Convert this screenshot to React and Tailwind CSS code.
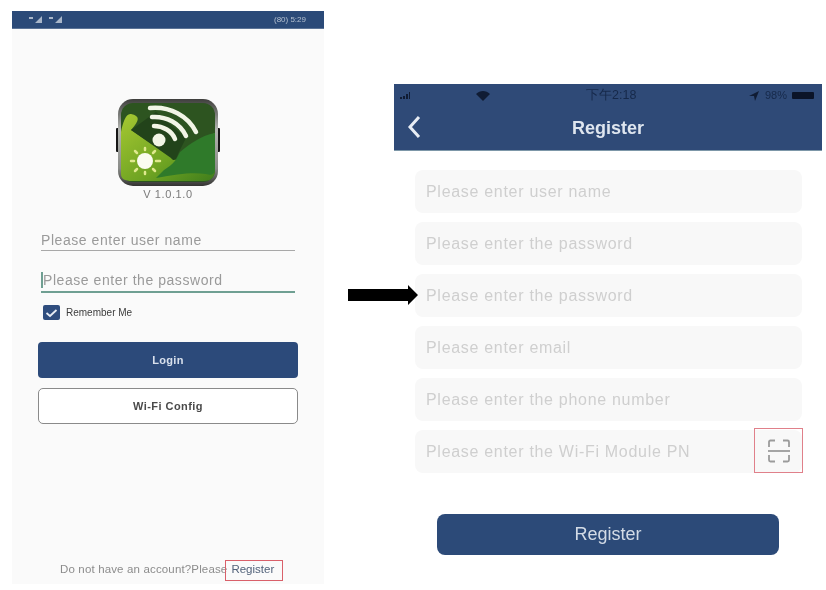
const font = { fontFamily: '"Liberation Sans", Arial, sans-serif' };

function AppLogo() {
  return (
    <svg width="104" height="90" viewBox="0 0 104 90" className="block">
      <defs>
        <linearGradient id="frame" x1="0" y1="0" x2="0" y2="1">
          <stop offset="0" stopColor="#3e3e3c" />
          <stop offset="0.35" stopColor="#b4b6b2" />
          <stop offset="0.8" stopColor="#8a8c88" />
          <stop offset="1" stopColor="#333331" />
        </linearGradient>
        <linearGradient id="lightGreen" x1="0" y1="0" x2="1" y2="1">
          <stop offset="0" stopColor="#a6c832" />
          <stop offset="0.6" stopColor="#6ea322" />
          <stop offset="1" stopColor="#3f7d1c" />
        </linearGradient>
      </defs>
      <rect x="0" y="30" width="5" height="24" rx="1" fill="#161616" />
      <rect x="99" y="30" width="5" height="24" rx="1" fill="#161616" />
      <rect x="2" y="1" width="100" height="87" rx="15" fill="url(#frame)" />
      <rect x="5" y="5" width="94" height="79" rx="12" fill="#2d5420" />
      <path d="M5 76 V34 C7 24 10 15 15 16 C24 18 24 22 15 32 L60 62 C68 62 70 48 99 35 V72 C99 80 94 83 88 83 H16 C9 83 5 81 5 76Z" fill="url(#lightGreen)" />
      <path d="M48 72 C58 66 60 62 64 54 C74 46 84 38 99 35 V70 C99 76 96 78 90 76 C76 74 62 76 40 80 Z" fill="#2f7a2a" />
      <path d="M15 32 L40 14 L70 40 L62 56 C60 62 58 64 55 60 Z" fill="#22431a" />
      <circle cx="43" cy="42" r="6.5" fill="#f2f5e6" />
      <g fill="none" stroke="#f2f5e6" strokeLinecap="round" strokeWidth="4.5">
        <path d="M38 28 C47 28 56 33 59 41" />
        <path d="M36 19 C50 18 64 25 70 38" />
        <path d="M34 10 C54 8 72 18 80 34" />
      </g>
      <circle cx="29" cy="63" r="8" fill="#fbfcf0" />
      <g stroke="#dfe98e" strokeWidth="2.5" strokeLinecap="round">
        <path d="M29 50 V52" /><path d="M29 74 V76" /><path d="M15 63 H18" /><path d="M40 63 H44" />
        <path d="M19 53 L21 55" /><path d="M37 71 L39 73" /><path d="M19 73 L21 71" /><path d="M37 55 L39 53" />
      </g>
    </svg>
  );
}

function LeftScreen() {
  return (
    <section className="w-[312px] h-[573px] mt-[11px] ml-[12px] shrink-0 bg-[#fafafa] flex flex-col items-center relative">
      <div className="w-full h-[18px] shrink-0 bg-[#2b4a78] border-b border-[#5b7396] flex items-center justify-between pl-[17px] pr-[18px]">
        <div className="flex gap-[5px]">
          <svg width="15" height="7" viewBox="0 0 15 7"><path d="M0 1H4V3H0Z M6 7 L13 0 V7Z" fill="#a9b6c9" /></svg>
          <svg width="15" height="7" viewBox="0 0 15 7"><path d="M0 1H4V3H0Z M6 7 L13 0 V7Z" fill="#a9b6c9" /></svg>
        </div>
        <span className="text-[8px] leading-none text-[#b4c0d0]">(80) 5:29</span>
      </div>
      <div className="mt-[69px]"><AppLogo /></div>
      <div className="text-[11px] leading-[13px] tracking-[0.6px] text-[#7a7a7a]">V 1.0.1.0</div>
      <div className="w-[254px] mt-[32px] h-[18px] border-b border-[#a8a8a8] text-[14px] leading-[15px] tracking-[0.55px] text-[#9a9a9a] whitespace-nowrap">Please enter user name</div>
      <div className="w-[254px] mt-[21px] h-[21px] border-b-2 border-[#6f9f92] text-[14px] leading-[17px] tracking-[0.55px] text-[#9a9a9a] whitespace-nowrap">
        <span className="border-l-2 border-[#6f9f92]">Please enter the password</span>
      </div>
      <div className="w-[254px] mt-[12px] pl-[2px] flex items-center gap-[6px]">
        <div className="w-[17px] h-[15px] rounded-[2px] bg-[#2f4d7e] flex items-center justify-center">
          <svg width="13" height="10" viewBox="0 0 13 10"><path d="M1.5 5 L5 8 L11.5 2" fill="none" stroke="#e8edf5" strokeWidth="1.8" /></svg>
        </div>
        <span className="text-[10px] leading-none text-[#3d3d3d]">Remember Me</span>
      </div>
      <button className="w-[260px] h-[36px] mt-[22px] rounded-[4px] bg-[#2c4a7a] text-[#d8e0ec] text-[11px] font-bold tracking-[0.3px]" style={font}>Login</button>
      <button className="w-[260px] h-[36px] mt-[10px] rounded-[5px] bg-white border border-[#8a8a8a] text-[#4a4a4a] text-[11px] font-bold tracking-[0.45px]" style={font}>Wi-Fi Config</button>
      <div className="absolute left-[48px] top-[552px] flex items-center text-[11.5px] leading-[13px] whitespace-nowrap">
        <span className="text-[#8c8c8c] tracking-[0.15px]">Do not have an account?Please</span>
        <span className="text-[#52627a] ml-[4px]">Register</span>
      </div>
      <div className="absolute left-[213px] top-[549px] w-[58px] h-[21px] border border-[#d9606a]" />
    </section>
  );
}

function Field({ text }) {
  return (
    <div className="h-[43px] rounded-[8px] bg-[#f8f8f8] flex items-center pl-[11px] text-[16px] tracking-[0.7px] text-[#cfcfcf]">{text}</div>
  );
}

function RightScreen() {
  const fields = [
    "Please enter user name",
    "Please enter the password",
    "Please enter the password",
    "Please enter email",
    "Please enter the phone number",
  ];
  return (
    <section className="w-[428px] mt-[84px] shrink-0 flex flex-col">
      <div className="h-[67px] bg-[#2f4a77] border-b border-[#7d97a8] flex flex-col">
        <div className="h-[22px] pt-[1px] pl-[6px] pr-[8px] flex items-center text-[#16294a]">
          <svg width="16" height="8" viewBox="0 0 16 8" className="shrink-0"><path d="M0 5h2v2H0Zm3-1h2v3H3Zm3-2h2v5H6Zm3-2h1v7H9Z" fill="#101c34" /></svg>
          <svg width="14" height="10" viewBox="0 0 14 10" className="ml-[60px] shrink-0"><path d="M0 3 C4 -1 10 -1 14 3 L7 10Z" fill="#101c34" /></svg>
          <span className="ml-[96px] text-[12.5px] leading-none whitespace-nowrap">下午2:18</span>
          <svg width="10" height="10" viewBox="0 0 10 10" className="ml-auto shrink-0"><path d="M10 0 L0 5 L5 5 L6 10Z" fill="#101c34" /></svg>
          <span className="ml-[6px] text-[11px] leading-none">98%</span>
          <div className="ml-[5px] w-[22px] h-[7px] rounded-[1px] bg-[#0b1428]" />
        </div>
        <div className="flex-1 relative flex items-center justify-center">
          <svg width="14" height="24" viewBox="0 0 14 24" className="absolute left-[13px] top-[9px]"><path d="M12 2 L3 12 L12 22" fill="none" stroke="#e8edf4" strokeWidth="3" /></svg>
          <span className="text-[18px] font-bold text-[#dfe6ef]" style={font}>Register</span>
        </div>
      </div>
      <div className="pl-[21px] pr-[20px] mt-[19px] flex flex-col gap-[9px]">
        {fields.map((t, i) => <Field key={i} text={t} />)}
        <div className="h-[43px] rounded-[8px] bg-[#f8f8f8] flex items-center justify-between pl-[11px] text-[16px] tracking-[0.7px] text-[#cfcfcf] relative">
          Please enter the Wi-Fi Module PN
          <div className="absolute right-[-1px] top-[-2px] w-[49px] h-[45px] border border-[#e0808a] flex items-center justify-center">
            <svg width="24" height="24" viewBox="0 0 24 24" fill="none" stroke="#9b9b9b" strokeWidth="1.8">
              <path d="M2 8 V3 Q2 1.5 3.5 1.5 H8 M16 1.5 H20.5 Q22 1.5 22 3 V8 M2 16 V21 Q2 22.5 3.5 22.5 H8 M16 22.5 H20.5 Q22 22.5 22 21 V16" />
              <path d="M1 12 H23" />
            </svg>
          </div>
        </div>
      </div>
      <button className="self-start ml-[43px] mt-[41px] w-[342px] h-[41px] rounded-[8px] bg-[#2c4a78] text-[#d3dbe6] text-[18px]" style={font}>Register</button>
    </section>
  );
}

function Arrow() {
  return (
    <div className="w-[70px] ml-[24px] mr-[-24px] mt-[285px] shrink-0 relative z-10">
      <svg width="70" height="20" viewBox="0 0 70 20" className="block">
        <path d="M0 4 H60 V0 L70 10 L60 20 V16 H0Z" fill="#000" />
      </svg>
    </div>
  );
}

export default function App() {
  return (
    <div className="w-[826px] h-[590px] bg-white flex overflow-hidden blur-[0.7px]" style={font}>
      <LeftScreen />
      <Arrow />
      <RightScreen />
    </div>
  );
}
